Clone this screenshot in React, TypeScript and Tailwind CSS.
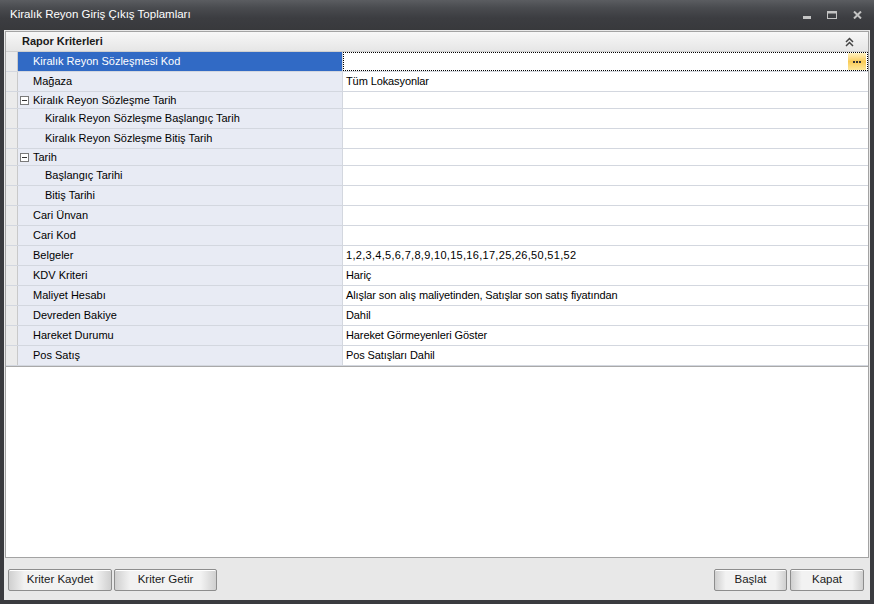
import React from 'react'

type Row = {
  label: string
  value?: string
  kind?: 'item' | 'group' | 'child'
  selected?: boolean
  wide?: boolean
}

const rows: Row[] = [
  { label: 'Kiralık Reyon Sözleşmesi Kod', selected: true },
  { label: 'Mağaza', value: 'Tüm Lokasyonlar' },
  { label: 'Kiralık Reyon Sözleşme Tarih', kind: 'group' },
  { label: 'Kiralık Reyon Sözleşme Başlangıç Tarih', kind: 'child' },
  { label: 'Kiralık Reyon Sözleşme Bitiş Tarih', kind: 'child' },
  { label: 'Tarih', kind: 'group' },
  { label: 'Başlangıç Tarihi', kind: 'child' },
  { label: 'Bitiş Tarihi', kind: 'child' },
  { label: 'Cari Ünvan' },
  { label: 'Cari Kod' },
  { label: 'Belgeler', value: '1,2,3,4,5,6,7,8,9,10,15,16,17,25,26,50,51,52', wide: true },
  { label: 'KDV Kriteri', value: 'Hariç' },
  { label: 'Maliyet Hesabı', value: 'Alışlar son alış maliyetinden, Satışlar son satış fiyatından' },
  { label: 'Devreden Bakiye', value: 'Dahil' },
  { label: 'Hareket Durumu', value: 'Hareket Görmeyenleri Göster' },
  { label: 'Pos Satış', value: 'Pos Satışları Dahil' },
]

function CollapseBox() {
  return (
    <span className="w-[9px] h-[9px] border border-[#7a7a7a] bg-white flex items-center justify-center mr-[4px]">
      <span className="w-[5px] h-px bg-[#333]" />
    </span>
  )
}

function GridRow({ row }: { row: Row }) {
  const h = row.kind === 'group' ? 'h-[17px]' : 'h-[20px]'
  return (
    <div className={`flex ${h} border-b border-[#d3d7df]`}>
      {/* gutter */}
      <div className="w-[12px] shrink-0 bg-[#ebebeb] border-r border-[#c9c9c9]" />
      {/* name */}
      <div
        className={`w-[325px] shrink-0 flex items-center border-r border-[#d3d7df] ${
          row.selected ? 'bg-[#316ac5] text-white' : 'bg-[#e8ebf4] text-black'
        } ${row.kind === 'group' ? 'pl-[2px]' : row.kind === 'child' ? 'pl-[27px]' : 'pl-[15px]'}`}
      >
        {row.kind === 'group' && <CollapseBox />}
        <span className="whitespace-nowrap">{row.label}</span>
      </div>
      {/* value */}
      <div
        className={`flex-1 flex items-center pl-[3px] bg-white ${
          row.selected ? 'border border-dotted border-black' : ''
        }`}
      >
        <span className={`whitespace-nowrap flex-1 ${row.wide ? 'tracking-[0.3px]' : 'tracking-[-0.1px]'}`}>
          {row.value ?? ''}
        </span>
        {row.selected && (
          <span className="w-[18px] h-[17px] mr-[1px] bg-gradient-to-b from-[#fff2c2] via-[#f9cb55] to-[#fde89a] flex items-center justify-center">
            <span className="flex gap-[1px]">
              <span className="w-[2px] h-[2px] bg-[#333]" />
              <span className="w-[2px] h-[2px] bg-[#333]" />
              <span className="w-[2px] h-[2px] bg-[#333]" />
            </span>
          </span>
        )}
      </div>
    </div>
  )
}

function Button({ label, w }: { label: string; w: string }) {
  return (
    <button
      className={`${w} h-[22px] rounded-[2px] border border-[#8d8d8d] text-[11.5px] text-[#1a1a1a] bg-[linear-gradient(to_right,#cfcfcf,#f2f2f2_15%,#f2f2f2_85%,#cfcfcf)] shadow-[inset_0_1px_0_#ffffff]`}
    >
      {label}
    </button>
  )
}

export default function App() {
  return (
    <div
      className="w-[874px] h-[604px] bg-[#3a3b3f] flex flex-col text-[11px]"
      style={{ fontFamily: '"Liberation Sans", Arial, sans-serif' }}
    >
      {/* Title bar */}
      <div className="h-[30px] shrink-0 flex items-center justify-between pl-[10px] pr-[12px] bg-[linear-gradient(to_bottom,#5b5d61,#4a4c50_25%,#3c3d41_60%,#38393c)]">
        <span className="text-white text-[11.5px]">Kiralık Reyon Giriş Çıkış Toplamları</span>
        <div className="flex items-center gap-[16px]">
          <svg width="8" height="8" viewBox="0 0 8 8">
            <rect x="0" y="5" width="8" height="3" fill="#c4c4c4" />
          </svg>
          <svg width="10" height="8" viewBox="0 0 10 8">
            <rect x="0.5" y="0.5" width="9" height="7" fill="none" stroke="#c4c4c4" />
            <rect x="0" y="0" width="10" height="2.5" fill="#c4c4c4" />
          </svg>
          <svg width="9" height="8" viewBox="0 0 9 8">
            <path d="M1 0.5 L8 7.5 M8 0.5 L1 7.5" stroke="#c4c4c4" strokeWidth="2" />
          </svg>
        </div>
      </div>

      {/* Body */}
      <div className="flex-1 mx-[4px] mb-[4px] bg-[#e8e8e8] flex flex-col">
        <div className="flex-1 mx-[1px] mt-[1px] bg-white border border-[#a3a3a3] flex flex-col">
          {/* Category header */}
          <div className="h-[20px] flex items-center justify-between pl-[16px] pr-[14px] bg-[linear-gradient(to_bottom,#f7f7f7,#e6e6e6)] border-b border-[#cfcfcf]">
            <span className="font-bold text-[#1a1a1a]">Rapor Kriterleri</span>
            <svg width="9" height="10" viewBox="0 0 9 10">
              <path d="M1 5 L4.5 1.5 L8 5 M1 9 L4.5 5.5 L8 9" fill="none" stroke="#444" strokeWidth="1.5" />
            </svg>
          </div>
          <div className="border-b border-[#a9a9a9]">
            {rows.map((r) => (
              <GridRow key={r.label} row={r} />
            ))}
          </div>
        </div>

        {/* Footer */}
        <div className="h-[42px] shrink-0 flex items-center justify-between pl-[4px] pr-[6px] pt-[2px]">
          <div className="flex gap-[2px]">
            <Button label="Kriter Kaydet" w="w-[104px]" />
            <Button label="Kriter Getir" w="w-[103px]" />
          </div>
          <div className="flex gap-[3px]">
            <Button label="Başlat" w="w-[73px]" />
            <Button label="Kapat" w="w-[74px]" />
          </div>
        </div>
      </div>
    </div>
  )
}
